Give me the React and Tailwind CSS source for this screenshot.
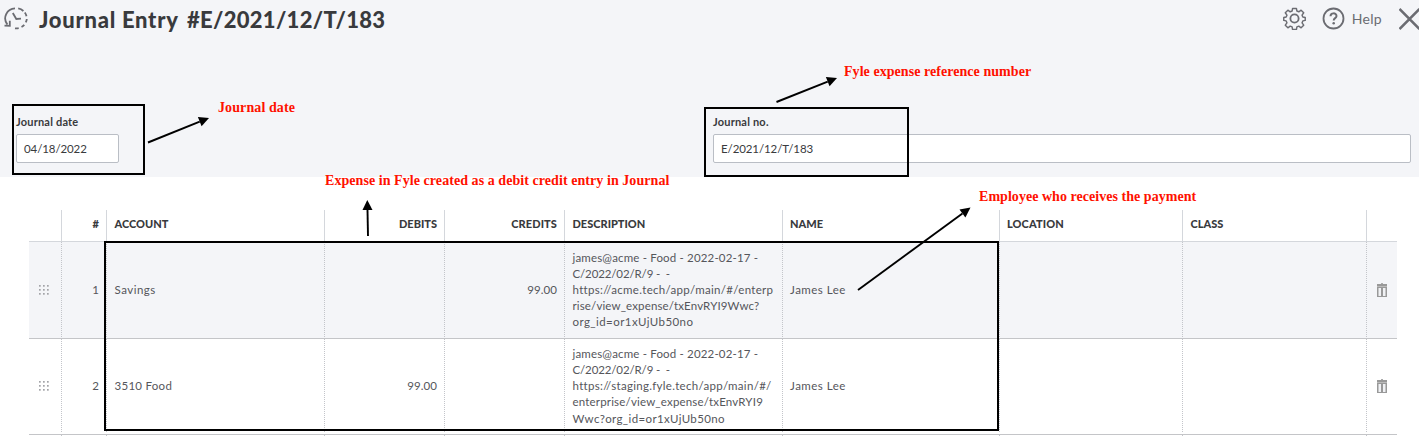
const cols =
  "grid grid-cols-[33px_45px_218px_120px_120px_218px_217px_183px_184px_30px]";

function HistoryIcon() {
  return (
    <svg className="mt-[7px] h-[23px] w-[24px] shrink-0" viewBox="0 0 24 23" fill="none" stroke="#6b6c72" strokeWidth="1.8">
      <path d="M3.4 17.6 A10 10 0 0 1 11 1.4" />
      <path d="M14.2 1.3 A10 10 0 0 1 19.4 4" />
      <path d="M20.8 5.5 A10 10 0 0 1 22.5 9.2" />
      <path d="M22.8 12 A10 10 0 0 1 21.8 15.4" />
      <path d="M20.3 17.8 A10 10 0 0 1 17.5 20" />
      <path d="M14.7 21.2 A10 10 0 0 1 11 21.3" />
      <path d="M0.5 18.6 L5.8 18.9 L5.8 13.8" />
      <path d="M8.8 6 L12.3 12 L17 11.6" />
    </svg>
  );
}

function GearIcon() {
  return (
    <svg className="h-[23px] w-[23px]" viewBox="0 0 24 24" fill="none" stroke="#6b6c72" strokeWidth="1.5" strokeLinejoin="round">
      <circle cx="12" cy="12" r="4.3" strokeWidth="1.9" />
      <path d="M10 1.500h4l.5 2.700 2 .8 2.400-1.700 2.700 2.700-1.700 2.500.8 2 2.500.5v3l-2.500.5-.8 2 1.700 2.500-2.700 2.700-2.400-1.700-2 .8-.5 2.700h-4l-.5-2.700-2-.8-2.400 1.700-2.700-2.700 1.700-2.500-.8-2-2.500-.5v-3l2.500-.5.8-2-1.700-2.500 2.700-2.700 2.400 1.700 2-.8z" />
    </svg>
  );
}

function HelpIcon() {
  return (
    <svg className="h-[23px] w-[23px]" viewBox="0 0 23 23" fill="none" stroke="#6b6c72" strokeWidth="1.8">
      <circle cx="11.500" cy="11.500" r="10" />
      <path d="M8.500 9.300c0-3.900 6-3.800 6-.3 0 2.300-2.800 2-2.800 4.600" strokeWidth="2" />
      <circle cx="11.700" cy="16.300" r="1.250" fill="#6b6c72" stroke="none" />
    </svg>
  );
}

function GripIcon() {
  return (
    <svg className="h-[10px] w-[10px]" viewBox="0 0 10 10" fill="#a3a4a8">
      {[0, 4, 8].map((y) =>
        [0, 4, 8].map((x) => <rect key={`${x}-${y}`} x={x} y={y} width="1.700" height="1.700" />)
      )}
    </svg>
  );
}

function TrashIcon() {
  return (
    <svg className="h-[14px] w-[10px]" viewBox="0 0 10 14">
      <rect x="4" y="0" width="2" height="1" fill="#aaa" />
      <rect x="0" y="1" width="10" height="2" fill="#999" />
      <rect x="0" y="3" width="10" height="1" fill="#bbb" />
      <rect x="0" y="4" width="10" height="10" fill="#999" />
      <rect x="1.500" y="5" width="2.500" height="8" fill="#f0f1f4" />
      <rect x="6" y="5" width="2.500" height="8" fill="#f0f1f4" />
    </svg>
  );
}

const headers = [
  ["", ""],
  ["#", "justify-end pr-[7px]"],
  ["ACCOUNT", "pl-[7.5px]"],
  ["DEBITS", "justify-end pr-[7px]"],
  ["CREDITS", "justify-end pr-[7px] tracking-[0.1px]"],
  ["DESCRIPTION", "pl-[7.5px]"],
  ["NAME", "pl-[7px]"],
  ["LOCATION", "pl-[7px] tracking-[0.1px]"],
  ["CLASS", "pl-[7.5px]"],
  ["", ""],
];

const rows = [
  {
    id: 1,
    account: "Savings",
    accountStyle: "tracking-[0.5px]",
    debit: "",
    credit: "99.00",
    name: "James Lee",
    style: "h-[97px] bg-[#f4f5f8]",
    description: [
      ["james@acme - Food - 2022-02-17 -", "tracking-[0.17px]"],
      ["C/2022/02/R/9 -  -", "tracking-[-0.13px]"],
      ["https://acme.tech/app/main/#/enterp", "tracking-[0.31px]"],
      ["rise/view_expense/txEnvRYI9Wwc?", "tracking-[0.14px]"],
      ["org_id=or1xUjUb50no", "tracking-[0.43px]"],
    ],
  },
  {
    id: 2,
    account: "3510 Food",
    accountStyle: "tracking-[0.28px]",
    debit: "99.00",
    credit: "",
    name: "James Lee",
    style: "h-[96px] bg-white pb-px",
    description: [
      ["james@acme - Food - 2022-02-17 -", "tracking-[0.17px]"],
      ["C/2022/02/R/9 -  -", "tracking-[-0.13px]"],
      ["https://staging.fyle.tech/app/main/#/", "tracking-[0.3px]"],
      ["enterprise/view_expense/txEnvRYI9", "tracking-[0.18px]"],
      ["Wwc?org_id=or1xUjUb50no", "-mb-px pt-px tracking-[0.37px]"],
    ],
  },
];

const cell = "flex items-center";
const amount = "ml-auto pr-[7px] tracking-[0.05px]";

function Divider() {
  return (
    <span className="ml-auto w-px shrink-0 self-stretch bg-[repeating-linear-gradient(to_bottom,#c3c5ca_0px,#c3c5ca_1px,transparent_1px,transparent_2px)]" />
  );
}

function Row({ row }) {
  return (
    <div className={`${cols} ${row.style} border-b border-[#c4c5c8] text-[11.5px] text-[#55565b]`}>
      <div className={`${cell} pl-[10px]`}><GripIcon /><Divider /></div>
      <div className={cell}><span className="ml-auto pr-[7px]">{row.id}</span><span className="flex self-stretch"><Divider /></span></div>
      <div className={`${cell} pl-[7.5px] ${row.accountStyle}`}>{row.account}<Divider /></div>
      <div className={cell}><span className={amount}>{row.debit}</span><span className="flex self-stretch"><Divider /></span></div>
      <div className={cell}><span className={amount}>{row.credit}</span><span className="flex self-stretch"><Divider /></span></div>
      <div className={`${cell} pl-[7.5px]`}>
        <div className="w-[201px] leading-[16px]">
          {row.description.map(([text, spacing]) => (
            <div key={text} className={`whitespace-pre ${spacing}`}>{text}</div>
          ))}
        </div>
        <Divider />
      </div>
      <div className={`${cell} pl-[7px] tracking-[0.5px]`}>{row.name}<Divider /></div>
      <div className={cell}><Divider /></div>
      <div className={cell}><Divider /></div>
      <div className={`${cell} justify-center`}><TrashIcon /></div>
    </div>
  );
}

const note = "absolute whitespace-nowrap font-['Liberation_Serif',serif] text-[14px] leading-[16px] font-bold text-[#ff1100]";

function Arrow({ from, to }) {
  const dx = to[0] - from[0];
  const dy = to[1] - from[1];
  const len = Math.hypot(dx, dy);
  const ux = dx / len;
  const uy = dy / len;
  const bx = to[0] - ux * 10;
  const by = to[1] - uy * 10;
  return (
    <g>
      <line x1={from[0]} y1={from[1]} x2={bx} y2={by} stroke="#000" strokeWidth="1.900" />
      <polygon points={`${to[0]},${to[1]} ${bx - uy * 5},${by + ux * 5} ${bx + uy * 5},${by - ux * 5}`} />
    </g>
  );
}

const label = "flex flex-col text-[11px] leading-[16px] font-bold text-[#393a3d]";
const field = "mt-[4px] flex h-[29px] items-center rounded-[2px] border border-[#babec5] bg-white pl-[7px] text-[11.5px] font-normal";

export default function App() {
  return (
    <div className="relative h-[436px] w-[1419px] overflow-hidden bg-white font-[Lato,sans-serif]">
      <div className="flex h-[177px] flex-col bg-[#f4f5f8]">
        <header className="flex h-[40px] pl-[4px]">
          <HistoryIcon />
          <h1 className="ml-[11px] flex pt-[6px] text-[22px] leading-[28px] font-black whitespace-nowrap text-[#393a3d]">
            <span className="w-[148px] tracking-[0.72px]">Journal Entry</span>
            <span className="tracking-[0.3px]">#E/2021/12/T/183</span>
          </h1>
          <div className="ml-auto flex h-[37px] items-center text-[#6b6c72]">
            <GearIcon />
            <span className="ml-[16px] flex"><HelpIcon /></span>
            <span className="ml-[7px] text-[14px] tracking-[0.3px]">Help</span>
            <svg className="ml-[17px] h-[22px] w-[20px]" viewBox="0 0 20 22" stroke="#6b6c72" strokeWidth="2.500">
              <path d="M0.500 1 L20.500 21 M20.500 1 L0.500 21" />
            </svg>
          </div>
        </header>
        <div className="mt-[74px] flex">
          <label className={`${label} ml-[16px] w-[103px]`}>
            <span className="tracking-[0.2px]">Journal date</span>
            <span className={`${field} tracking-[-0.1px]`}>04/18/2022</span>
          </label>
          <label className={`${label} ml-[594px] w-[698px]`}>
            <span className="tracking-[0.2px]">Journal no.</span>
            <span className={`${field} tracking-[-0.1px]`}>E/2021/12/T/183</span>
          </label>
        </div>
      </div>

      <div className="mt-[33px] ml-[29px] w-[1368px]">
        <div className={`${cols} h-[32px] border-b border-[#d4d7dc] text-[11px] font-black text-[#393a3d]`}>
          {headers.map(([text, style], i) => (
            <div key={i} className={`flex items-center pb-[2px] ${i < 9 ? "border-r border-[#d4d7dc]" : ""} ${style}`}>
              {text}
            </div>
          ))}
        </div>
        {rows.map((row) => <Row key={row.id} row={row} />)}
        <div className={`${cols} h-[2px]`}>
          {headers.slice(0, 9).map((_, i) => <div key={i} className="flex"><Divider /></div>)}
        </div>
      </div>

      <div className="absolute top-[104px] left-[12px] h-[71px] w-[133px] border-2 border-black" />
      <div className="absolute top-[107px] left-[704px] h-[70px] w-[205px] border-2 border-black" />
      <div className="absolute top-[241px] left-[104px] h-[190px] w-[895px] border-2 border-black" />
      <svg className="absolute top-0 left-0 h-[436px] w-[1419px]" viewBox="0 0 1419 436">
        <Arrow from={[148, 142.500]} to={[209, 118]} />
        <Arrow from={[776.500, 102]} to={[837, 78]} />
        <Arrow from={[368, 236]} to={[367.300, 200]} />
        <Arrow from={[858, 290]} to={[970.500, 207.500]} />
      </svg>
      <span className={`${note} top-[100px] left-[218px] tracking-[0.1px]`}>Journal date</span>
      <span className={`${note} top-[64px] left-[844px] tracking-[0.05px]`}>Fyle expense reference number</span>
      <span className={`${note} top-[173px] left-[325px] tracking-[0.06px]`}>Expense in Fyle created as a debit credit entry in Journal</span>
      <span className={`${note} top-[189px] left-[979px] tracking-[0.04px]`}>Employee who receives the payment</span>
    </div>
  );
}
